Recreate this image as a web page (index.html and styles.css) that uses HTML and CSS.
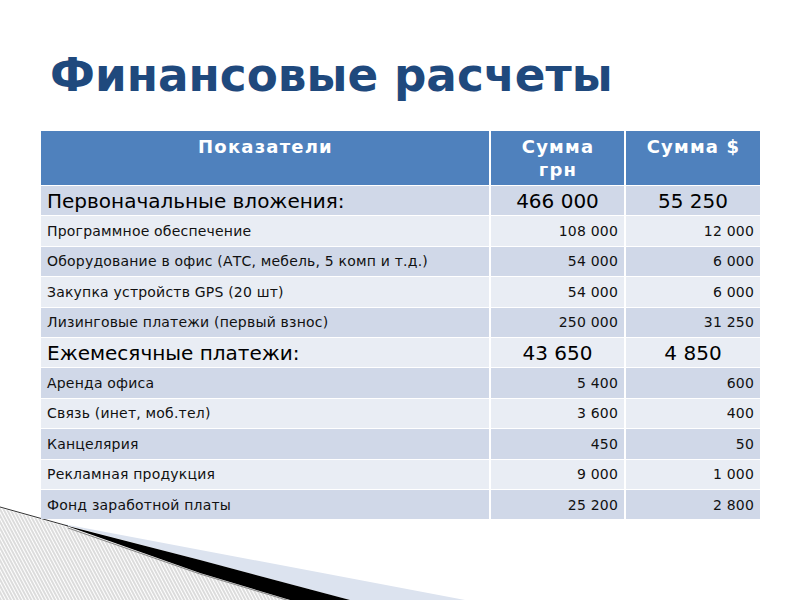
FILE: index.html
```html
<!DOCTYPE html>
<html lang="ru">
<head>
<meta charset="utf-8">
<title>Финансовые расчеты</title>
<link rel="stylesheet" href="styles.css">
</head>
<body>
<div class="slide">
  <svg class="deco" width="480" height="100" viewBox="0 500 480 100" xmlns="http://www.w3.org/2000/svg">
    <defs>
      <pattern id="hatch" patternUnits="userSpaceOnUse" width="3" height="6" patternTransform="rotate(-28)">
        <line x1="1" y1="0" x2="1" y2="6" stroke="#9a9a9a" stroke-width="0.7"/>
      </pattern>
    </defs>
    <polygon points="58,523 465,600 350,600 200,560" fill="#dce3ef"/>
    <polygon points="0,508 68,527 200,573 290,600 0,600" fill="url(#hatch)"/>
    <polyline points="0,507 68,526" fill="none" stroke="#333" stroke-width="1"/>
    <polyline points="68,528 200,574 290,601" fill="none" stroke="#888" stroke-width="1"/>
    <polygon points="64,525 200,560 350,600 290,600 200,573" fill="#000"/>
  </svg>

  <h1 class="title">Финансовые расчеты</h1>

  <div class="table">
    <div class="row head">
      <div class="cell">Показатели</div>
      <div class="cell">Сумма<br>грн</div>
      <div class="cell">Сумма $</div>
    </div>
    <div class="row big dark">
      <div class="cell">Первоначальные вложения:</div>
      <div class="cell num">466 000</div>
      <div class="cell num">55 250</div>
    </div>
    <div class="row light">
      <div class="cell">Программное обеспечение</div>
      <div class="cell num">108 000</div>
      <div class="cell num">12 000</div>
    </div>
    <div class="row dark">
      <div class="cell">Оборудование в офис (АТС, мебель, 5 комп и т.д.)</div>
      <div class="cell num">54 000</div>
      <div class="cell num">6 000</div>
    </div>
    <div class="row light">
      <div class="cell">Закупка устройств GPS (20 шт)</div>
      <div class="cell num">54 000</div>
      <div class="cell num">6 000</div>
    </div>
    <div class="row dark">
      <div class="cell">Лизинговые платежи (первый взнос)</div>
      <div class="cell num">250 000</div>
      <div class="cell num">31 250</div>
    </div>
    <div class="row big light">
      <div class="cell">Ежемесячные платежи:</div>
      <div class="cell num">43 650</div>
      <div class="cell num">4 850</div>
    </div>
    <div class="row dark">
      <div class="cell">Аренда офиса</div>
      <div class="cell num">5 400</div>
      <div class="cell num">600</div>
    </div>
    <div class="row light">
      <div class="cell">Связь (инет, моб.тел)</div>
      <div class="cell num">3 600</div>
      <div class="cell num">400</div>
    </div>
    <div class="row dark">
      <div class="cell">Канцелярия</div>
      <div class="cell num">450</div>
      <div class="cell num">50</div>
    </div>
    <div class="row light">
      <div class="cell">Рекламная продукция</div>
      <div class="cell num">9 000</div>
      <div class="cell num">1 000</div>
    </div>
    <div class="row dark">
      <div class="cell">Фонд заработной платы</div>
      <div class="cell num">25 200</div>
      <div class="cell num">2 800</div>
    </div>
  </div>
</div>
</body>
</html>
```

FILE: styles.css
```css
html, body {
  margin: 0;
  padding: 0;
  background: #ffffff;
}

.slide {
  position: relative;
  width: 800px;
  height: 600px;
  overflow: hidden;
  background: #ffffff;
  font-family: "DejaVu Sans", "Liberation Sans", sans-serif;
}

.deco {
  position: absolute;
  left: 0;
  bottom: 0;
  z-index: 0;
}

.title {
  position: relative;
  z-index: 1;
  margin: 0;
  padding: 49px 0 0 50px;
  font-size: 45.3px;
  line-height: 54px;
  font-weight: bold;
  color: #1f497d;
}

.table {
  position: relative;
  z-index: 1;
  margin: 28px 0 0 41px;
  width: 719px;
  display: flex;
  flex-direction: column;
  gap: 1px;
  background: #ffffff;
}

.row {
  display: grid;
  grid-template-columns: 448px 133px 134px;
  column-gap: 2px;
  height: 29.4px;
}

.cell {
  display: flex;
  align-items: center;
  padding: 0 6px 0 6px;
  font-size: 14px;
  letter-spacing: 0.2px;
  color: #111;
  white-space: nowrap;
}

.row.dark .cell { background: #d0d8e8; }
.row.light .cell { background: #e9edf4; }

.cell.num { justify-content: flex-end; }

.row.head {
  height: 54px;
}

.row.head .cell {
  background: #4f81bd;
  color: #ffffff;
  font-weight: bold;
  font-size: 18px;
  letter-spacing: 1.2px;
  line-height: 23px;
  align-items: flex-start;
  justify-content: center;
  text-align: center;
  padding: 4px 0 0 1px;
}

.row.big .cell {
  font-size: 20px;
  letter-spacing: 0;
  color: #000;
}

.row.big .cell.num {
  justify-content: center;
  padding: 0;
}
```
